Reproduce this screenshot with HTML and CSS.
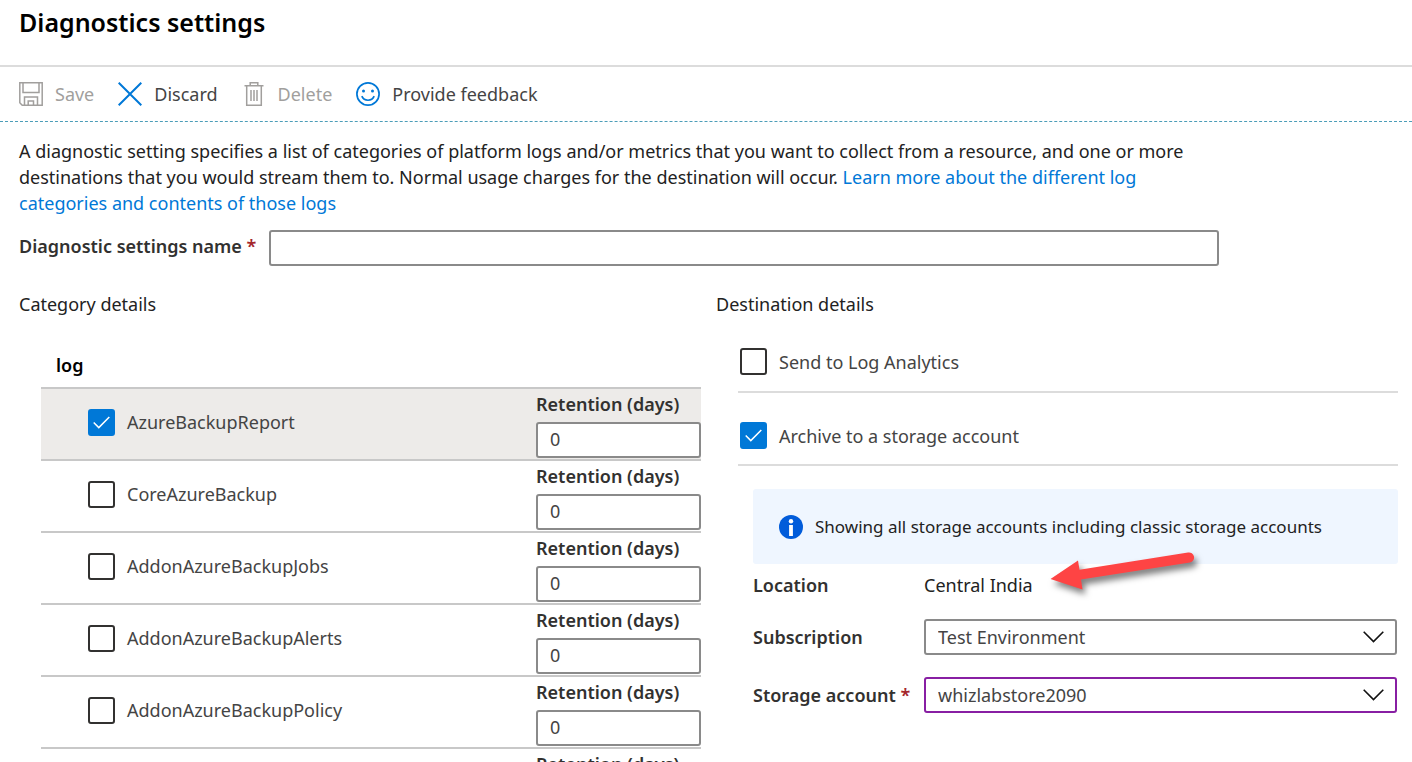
FILE: index.html
```html
<!DOCTYPE html>
<html lang="en">
<head>
    <meta charset="UTF-8" />
    <meta name="viewport" content="width=device-width, initial-scale=1" />
    <title>Diagnostics settings</title>
    <link rel="stylesheet" href="styles.css">
</head>
<body>
<header class="page-header">
    <h1>Diagnostics settings</h1>
</header>

<div class="toolbar">
    <button type="button" disabled>
        <svg class="icon" viewBox="0 0 24 24" fill="none" stroke="currentColor" stroke-width="1.5">
            <path d="M.8 .8H23.2V23.2H3.2L.8 20.8ZM4 .8V10.5H20V.8M5.5 23V15H18.5V23M9.2 23V19H14.5V23" />
        </svg>
        Save
    </button>
    <button type="button">
        <svg class="icon icon-blue" viewBox="0 0 24 24" fill="none" stroke="currentColor" stroke-width="2">
            <path d="M.7 .7L23.3 23.3M23.3 .7L.7 23.3" />
        </svg>
        Discard
    </button>
    <button type="button" disabled>
        <svg class="icon" viewBox="0 0 24 24" fill="none" stroke="currentColor" stroke-width="1.5">
            <path d="M2.5 3.7H21.5M8.2 3.5V.8H15.8V3.5M4.7 3.7V23.2H19.3V3.7" />
            <path d="M9 8V19M12 8V19M15 8V19" />
        </svg>
        Delete
    </button>
    <button type="button">
        <svg class="icon icon-blue" viewBox="0 0 24 24" fill="none" stroke="currentColor" stroke-width="1.7">
            <circle cx="12" cy="12" r="11.1" />
            <path d="M5.8 14.2C8.2 19.6 15.8 19.6 18.2 14.2" />
            <circle cx="7.5" cy="9" r="1.5" fill="currentColor" stroke="none" />
            <circle cx="16.5" cy="9" r="1.5" fill="currentColor" stroke="none" />
        </svg>
        Provide feedback
    </button>
</div>

<main class="content">
    <p class="description">A diagnostic setting specifies a list of categories of platform logs and/or metrics that you want to collect from a resource, and one or more destinations that you would stream them to. Normal usage charges for the destination will occur. <a href="#">Learn more about the different log categories and contents of those logs</a></p>

    <div class="name-row">
        <label for="settingName">Diagnostic settings name <span class="required">*</span></label>
        <input type="text" id="settingName" class="field" />
    </div>

    <div class="columns">
        <section>
            <h2>Category details</h2>
            <table class="log-table">
                <thead>
                    <tr><th colspan="2">log</th></tr>
                </thead>
                <tbody>
                    <tr class="selected">
                        <td><label class="check"><input type="checkbox" checked />AzureBackupReport</label></td>
                        <td class="retention"><label for="days1">Retention (days)</label><input type="text" id="days1" class="field" value="0" /></td>
                    </tr>
                    <tr>
                        <td><label class="check"><input type="checkbox" />CoreAzureBackup</label></td>
                        <td class="retention"><label for="days2">Retention (days)</label><input type="text" id="days2" class="field" value="0" /></td>
                    </tr>
                    <tr>
                        <td><label class="check"><input type="checkbox" />AddonAzureBackupJobs</label></td>
                        <td class="retention"><label for="days3">Retention (days)</label><input type="text" id="days3" class="field" value="0" /></td>
                    </tr>
                    <tr>
                        <td><label class="check"><input type="checkbox" />AddonAzureBackupAlerts</label></td>
                        <td class="retention"><label for="days4">Retention (days)</label><input type="text" id="days4" class="field" value="0" /></td>
                    </tr>
                    <tr>
                        <td><label class="check"><input type="checkbox" />AddonAzureBackupPolicy</label></td>
                        <td class="retention"><label for="days5">Retention (days)</label><input type="text" id="days5" class="field" value="0" /></td>
                    </tr>
                    <tr>
                        <td></td>
                        <td class="retention"><label for="days6">Retention (days)</label><input type="text" id="days6" class="field" value="0" /></td>
                    </tr>
                </tbody>
            </table>
        </section>

        <section>
            <h2>Destination details</h2>
            <div class="destinations">
                <label class="check destination"><input type="checkbox" />Send to Log Analytics</label>
                <label class="check destination"><input type="checkbox" checked />Archive to a storage account</label>
            </div>

            <div class="storage">
                <div class="info">
                    <svg class="icon" viewBox="0 0 24 24">
                        <circle cx="12" cy="12" r="12" fill="#015cda" />
                        <circle cx="12" cy="6.2" r="2.2" fill="#fff" />
                        <rect x="10.1" y="10" width="3.8" height="11" fill="#fff" />
                    </svg>
                    Showing all storage accounts including classic storage accounts
                </div>

                <div class="storage-row location">
                    <span class="label">Location</span>
                    <span class="value">Central India
                        <svg class="arrow" viewBox="0 0 160 56">
                            <path d="M8.500 32L36 13.500L37.500 22.800L146 5.500A5 5 0 0 1 148 15.500L39 32.500L40.500 42.500Z" fill="#fe4444" />
                        </svg>
                    </span>
                </div>
                <div class="storage-row">
                    <label class="label" for="subscription">Subscription</label>
                    <select id="subscription" class="field">
                        <option>Test Environment</option>
                    </select>
                </div>
                <div class="storage-row">
                    <label class="label" for="account">Storage account <span class="required">*</span></label>
                    <select id="account" class="field active">
                        <option>whizlabstore2090</option>
                    </select>
                </div>
            </div>
        </section>
    </div>
</main>
</body>
</html>
```
FILE: styles.css
```css
:root {
    --blue: #0078d7;
    --text: #323130;
    --text-light: #444;
    --border: #8a8a8a;
    --line: #c8c8c8;
}

* {
    box-sizing: border-box;
}

body {
    margin: 0;
    height: 100vh;
    overflow: hidden;
    background-color: #fff;
    color: #222;
    font-family: "Noto Sans", "Open Sans", sans-serif;
    font-size: 18px;
    line-height: 26px;
}

button, input, select {
    font: inherit;
    color: inherit;
}

a {
    color: var(--blue);
    text-decoration: none;
}

.page-header {
    height: 67px;
    padding: 5px 19px;
    border-bottom: 2px solid #dcdcdc;
}

h1 {
    margin: 0;
    color: #000;
    font-size: 25px;
    font-weight: 600;
    line-height: 34px;
}

h2 {
    margin: 0;
    font-size: 18px;
    font-weight: 400;
    line-height: 26px;
}

.toolbar {
    display: flex;
    gap: 24px;
    height: 55px;
    padding: 0 19px;
    border-bottom: 1px dashed #4c9db8;
}

.toolbar button {
    display: flex;
    align-items: center;
    gap: 12px;
    padding: 0;
    border: none;
    background: none;
    color: var(--text-light);
    cursor: pointer;
}

.toolbar button:disabled {
    color: #a19f9d;
    cursor: default;
}

.icon {
    flex: none;
    width: 24px;
    height: 24px;
}

.toolbar .icon-blue {
    color: var(--blue);
}

.content {
    padding: 16px 14px 0 19px;
}

.description {
    max-width: 1200px;
    margin: 0 0 14px;
}

.name-row {
    display: flex;
    gap: 13px;
    max-width: 1200px;
}

.name-row label,
.label,
.retention label {
    color: var(--text);
    font-weight: 600;
    white-space: nowrap;
}

.name-row label {
    line-height: 32px;
}

.required {
    color: #a4262c;
}

.field {
    flex: 1;
    min-width: 0;
    width: 100%;
    height: 36px;
    padding: 0 12px;
    border: 2px solid var(--border);
    border-radius: 3px;
    background-color: #fff;
    color: var(--text-light);
}

.columns {
    display: grid;
    grid-template-columns: 1fr 1fr;
    gap: 15px;
    margin-top: 25px;
}

.log-table {
    width: calc(100% - 22px);
    margin: 26px 0 0 22px;
    border-spacing: 0;
}

.log-table th {
    height: 44px;
    padding: 0 15px;
    color: #000;
    font-weight: 600;
    text-align: left;
}

.log-table td {
    height: 72px;
    padding: 0 0 4px 47px;
    border-top: 2px solid var(--line);
}

.log-table .selected td {
    background-color: #edebe9;
}

.log-table .retention {
    width: 165px;
    padding: 0;
    vertical-align: top;
}

.retention label {
    display: block;
    padding-bottom: 2px;
    line-height: 31px;
}

.retention .field {
    display: block;
    padding-bottom: 2px;
}

.check {
    display: flex;
    align-items: center;
    gap: 12px;
    color: var(--text-light);
}

.check input {
    appearance: none;
    flex: none;
    width: 27px;
    height: 27px;
    margin: 0;
    border: 2px solid var(--text);
    border-radius: 3px;
    background: #fff center / 17px 13px no-repeat;
}

.check input:checked {
    border-color: var(--blue);
    background-color: var(--blue);
    background-image: url("data:image/svg+xml,%3Csvg xmlns='http://www.w3.org/2000/svg' viewBox='0 0 17 13'%3E%3Cpath d='M.7 6.500L5.800 11.600L16.300 1' fill='none' stroke='white' stroke-width='1.500'/%3E%3C/svg%3E");
}

.destinations {
    margin: 15px 0 0 22px;
}

.destination {
    height: 61px;
    padding-left: 2px;
    border-bottom: 2px solid #dcdcdc;
}

.destination + .destination {
    height: 73px;
    padding-top: 14px;
}

.storage {
    display: flex;
    flex-direction: column;
    gap: 22px;
    margin: 23px 0 0 37px;
}

.info {
    display: flex;
    align-items: center;
    gap: 12px;
    height: 75px;
    padding: 0 26px;
    border-radius: 3px;
    background-color: #eff6ff;
    font-size: 17px;
}

.storage-row {
    display: flex;
    align-items: center;
    height: 36px;
    padding-right: 1px;
}

.storage-row .label {
    flex: none;
    width: 171px;
}

/* sits right under the info banner */
.location {
    height: 34px;
    margin: -18px 0 -5px;
}

.value {
    position: relative;
}

.arrow {
    position: absolute;
    left: 118px;
    top: -25px;
    width: 160px;
    height: 56px;
    overflow: visible;
    filter: drop-shadow(3px 5px 3px rgba(0, 0, 0, 0.5));
    pointer-events: none;
}

select.field {
    appearance: none;
    background: #fff right 11px center / 21px 12px no-repeat url("data:image/svg+xml,%3Csvg xmlns='http://www.w3.org/2000/svg' viewBox='0 0 21 12'%3E%3Cpath d='M.7 .8L10.500 10.600L20.300 .8' fill='none' stroke='%23111' stroke-width='1.600'/%3E%3C/svg%3E");
}

select.active {
    border-color: #881fa3;
}
```
